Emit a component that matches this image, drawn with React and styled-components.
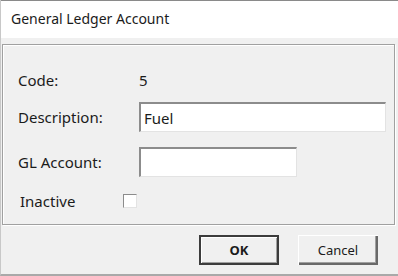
import React from "react"
import styled, { createGlobalStyle } from "styled-components"

const GlobalStyle = createGlobalStyle`
  html, body {
    margin: 0;
    padding: 0;
    background: #f0f0f0;
  }
  * {
    box-sizing: border-box;
  }
`

const Window = styled.div`
  width: 398px;
  height: 276px;
  display: flex;
  flex-direction: column;
  background: #f0f0f0;
  border-left: 1px solid #c8c8c8;
  border-bottom: 2px solid #a9a9a9;
  font-family: "Noto Sans", "Open Sans", sans-serif;
  color: #1b1b1b;
  overflow: hidden;
`

const TitleBar = styled.div`
  height: 38px;
  flex: none;
  display: flex;
  align-items: center;
  padding-left: 10px;
  padding-bottom: 2px;
  background: #fff;
  border-top: 1px solid #8a8a8a;
  font-size: 14px;
`

const Panel = styled.div`
  margin: 6px 3px 0 1px;
  height: 181px;
  flex: none;
  border: 1px solid #a0a0a0;
  box-shadow: inset 1px 1px 0 #fff, 1px 1px 0 #fff;
  padding: 19px 0 0 15px;
  display: flex;
  flex-direction: column;
`

const Row = styled.div`
  display: flex;
  align-items: center;
  height: ${p => p.h}px;
  margin-top: ${p => p.gap || 0}px;
`

const Label = styled.span`
  width: ${p => p.w || 121}px;
  flex: none;
  font-size: 15px;
  margin-left: ${p => p.indent || 0}px;
`

const Value = styled.span`
  font-size: 15px;
`

const TextBox = styled.div`
  width: ${p => p.w}px;
  height: ${p => p.h}px;
  background: #fff;
  border-top: 2px solid #8c8c8c;
  border-left: 2px solid #8c8c8c;
  border-right: 1px solid #e3e3e3;
  border-bottom: 1px solid #e3e3e3;
  display: flex;
  align-items: center;
  padding-left: 3px;
  font-size: 15px;
`

const CheckBox = styled.div`
  width: 14px;
  height: 14px;
  background: #fff;
  border-top: 1px solid #8c8c8c;
  border-left: 1px solid #8c8c8c;
  border-right: 1px solid #e3e3e3;
  border-bottom: 1px solid #e3e3e3;
`

const Footer = styled.div`
  flex: 1;
  display: flex;
  justify-content: flex-end;
  align-items: flex-start;
  gap: 19px;
  padding: 10px 20px 0 0;
`

const Button = styled.div`
  width: 80px;
  height: 30px;
  display: flex;
  align-items: center;
  justify-content: center;
  font-size: 13px;
  font-weight: ${p => (p.primary ? 700 : 400)};
  background: #f0f0f0;
  border: ${p => (p.primary ? "2px solid #3c3c3c" : "none")};
  box-shadow: ${p =>
    p.primary
      ? "inset 1px 1px 0 #fff, inset -1px -1px 0 #a0a0a0"
      : "inset 1px 1px 0 #fff, inset -2px -2px 0 #696969, inset -3px -3px 0 #a0a0a0"};
`

export default function App() {
  return (
    <>
      <GlobalStyle />
      <Window>
        <TitleBar>General Ledger Account</TitleBar>
        <Panel>
          <Row h={32}>
            <Label>Code:</Label>
            <Value>5</Value>
          </Row>
          <Row h={30} gap={6}>
            <Label>Description:</Label>
            <TextBox w={247} h={30}>Fuel</TextBox>
          </Row>
          <Row h={30} gap={15}>
            <Label>GL Account:</Label>
            <TextBox w={158} h={30} />
          </Row>
          <Row h={16} gap={16}>
            <Label w={103} indent={2}>Inactive</Label>
            <CheckBox />
          </Row>
        </Panel>
        <Footer>
          <Button primary>OK</Button>
          <Button>Cancel</Button>
        </Footer>
      </Window>
    </>
  )
}
